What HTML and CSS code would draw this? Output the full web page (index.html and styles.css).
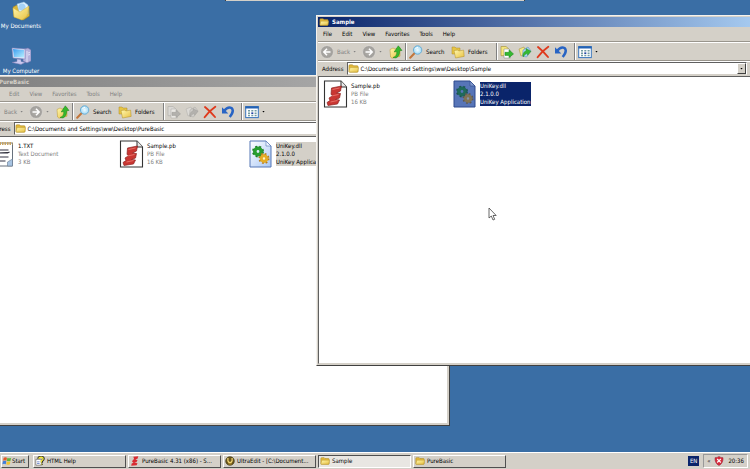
FILE: index.html
```html
<!DOCTYPE html>
<html lang="en">
<head>
<meta charset="utf-8">
<title>Desktop</title>
<link rel="stylesheet" href="styles.css">
</head>
<body>
<svg class="defs" aria-hidden="true">
  <defs>
    <linearGradient id="g-folder" x1="0" y1="0" x2="1" y2="1"><stop offset="0" stop-color="#fff8b0"/><stop offset="1" stop-color="#e8c040"/></linearGradient>
    <linearGradient id="g-screen" x1="0" y1="0" x2="1" y2="1"><stop offset="0" stop-color="#3a9cf0"/><stop offset="1" stop-color="#b8f0ff"/></linearGradient>
    <linearGradient id="g-dll" x1="0" y1="0" x2="1" y2="1"><stop offset="0" stop-color="#ffffff"/><stop offset="1" stop-color="#a9c8f6"/></linearGradient>
    <radialGradient id="g-nav"><stop offset="0" stop-color="#b4b2ae"/><stop offset=".8" stop-color="#a3a19d"/><stop offset="1" stop-color="#8b8985"/></radialGradient>
    <radialGradient id="g-lens"><stop offset="0" stop-color="#f2fcff"/><stop offset="1" stop-color="#9fd8f4"/></radialGradient>
  </defs>
  <symbol id="folder" viewBox="0 0 12 12"><path d="M1 3q0-1 1-1h3l1 1h4q1 0 1 1v5q0 1-1 1H2q-1 0-1-1z" fill="#e2b93a" stroke="#a88420" stroke-width=".6"/><path d="M1 9.8 2.2 5h9.2l-.9 4.8z" fill="url(#g-folder)" stroke="#b8952c" stroke-width=".5"/></symbol>
  <symbol id="back" viewBox="0 0 14 14"><circle cx="7" cy="7" r="6.3" fill="url(#g-nav)" stroke="#dedcd8" stroke-width=".8"/><path d="M10.5 7H4M7 3.8 3.8 7 7 10.2" fill="none" stroke="#fff" stroke-width="1.5"/></symbol>
  <symbol id="forward" viewBox="0 0 14 14"><circle cx="7" cy="7" r="6.3" fill="url(#g-nav)" stroke="#dedcd8" stroke-width=".8"/><path d="M3.5 7H10M7 3.8 10.2 7 7 10.2" fill="none" stroke="#fff" stroke-width="1.5"/></symbol>
  <symbol id="up" viewBox="0 0 14 14"><path d="M1 4.5 4 3l2 1 5-1.5v8.7L3 13.2 1.6 12z" fill="url(#g-folder)" stroke="#b9972f" stroke-width=".5"/><path d="M4 12.5q4-1.2 3.8-6L5.2 7 9.3.8 13 5.4l-2.5.4q.6 5-3.5 7.2z" fill="#35b82e" stroke="#18801a" stroke-width=".5"/></symbol>
  <symbol id="search" viewBox="0 0 14 14"><path d="m5.5 8.3-4.3 4.5" stroke="#c2763c" stroke-width="2" stroke-linecap="round"/><circle cx="8.6" cy="5" r="4.2" fill="url(#g-lens)" stroke="#6caed4" stroke-width="1"/><path d="M6.5 4q.8-1.8 2.5-1.7" stroke="#fff" fill="none"/></symbol>
  <symbol id="folders" viewBox="0 0 14 14"><path d="M1 2h3l1 1h4v6H1z" fill="#e6c546" stroke="#ac8927" stroke-width=".5"/><path d="M3 5.5 7 5l.8 1 4.8-.9.6 6.3L4.5 13z" fill="url(#g-folder)" stroke="#b18e2a" stroke-width=".5"/></symbol>
  <symbol id="moveto" viewBox="0 0 14 14"><path d="M1 1.5h5l2.4 2v7.2H1z" fill="#f5e77d" stroke="#9f8a35" stroke-width=".6"/><path d="M4 4h5l1.5 1.5V13H4z" fill="#fff" stroke="#808080" stroke-width=".5"/><path d="M5 7.3h4V4.8l4.5 4.1L9 12.7v-2.3H5z" fill="#35b931" stroke="#188019" stroke-width=".5"/></symbol>
  <symbol id="copyto" viewBox="0 0 14 14"><path d="m1 4 5-2 2 7-5 2z" fill="#f6e986" stroke="#9f8a35" stroke-width=".5"/><path d="m5 5 5-3 3 4-4.5 6-4-1z" fill="#a8d4f5" stroke="#4f87b8" stroke-width=".5"/><path d="M5 12q-.6-5 3.2-6.3L8 3.5l5 2.8-3.4 4-.4-2Q7 9 5 12z" fill="#35b931" stroke="#188019" stroke-width=".4"/></symbol>
  <symbol id="delete" viewBox="0 0 14 14"><path d="M2 2q5 4 10 10M12.3 1.7Q6 6 1.6 12.3" fill="none" stroke="#df3a1d" stroke-width="1.9" stroke-linecap="round"/></symbol>
  <symbol id="undo" viewBox="0 0 14 14"><path d="M3 6q4-5 7.5-3 3.2 3-1.8 9" fill="none" stroke="#2864c4" stroke-width="2.5"/><path d="M1 2.2v6.4h6.3z" fill="#2864c4"/></symbol>
  <symbol id="views" viewBox="0 0 14 14"><rect x=".7" y="1.6" width="12.6" height="11" fill="#fff" stroke="#3976bd"/><path d="M.3 2.4h13.4" stroke="#2462b4" stroke-width="2.2"/><path d="M3 5.8h2M6.3 5.8h2M9.6 5.8h2M3 8.2h2M9.6 8.2h2M3 10.5h2M6.3 10.5h2M9.6 10.5h2" stroke="#729ca4" stroke-width="1.4"/><path d="M6.3 8.2h2" stroke="#2042a0" stroke-width="1.6"/></symbol>
  <symbol id="pb" viewBox="0 0 24 28"><path d="M1 1h16.5l5.500 6v20H1z" fill="#fff" stroke="#333" stroke-width="1.1"/><path d="M17.500 1v6H23" fill="#e8e8e8" stroke="#333"/><path d="m8 8 10-2-1 5-4 2 4 .5-1 4.500-4 1.500 4 .5-2 4-9.500 1.500-1-3 3-2-1-2.500 4-2.500-2-1z" fill="#c93632" stroke="#8d2423" stroke-width=".7"/><path d="m9 9.500 7-1.500M8 16l7-1.500M7 22l7-1.500" stroke="#ee7f76" stroke-width=".8"/></symbol>
  <symbol id="dll" viewBox="0 0 24 28"><path class="page" d="M1.500 1h16l5 5v21h-21z" fill="url(#g-dll)" stroke="#5577b5"/><path d="M17.500 1v5h5z" fill="#eef5ff" stroke="#5577b5" stroke-width=".6"/><circle cx="9.500" cy="11.500" r="3.200" fill="none" stroke="#279e2f" stroke-width="3.600"/><circle cx="9.500" cy="11.500" r="5.200" fill="none" stroke="#1d8026" stroke-width="1.500" stroke-dasharray="2 2.200"/><circle cx="15.500" cy="18.500" r="2.800" fill="#fff6c8" stroke="#e5ad25" stroke-width="3.200"/><circle cx="15.500" cy="18.500" r="4.800" fill="none" stroke="#b97e18" stroke-width="1.500" stroke-dasharray="1.800 2"/></symbol>
  <symbol id="dll-selected" viewBox="0 0 24 28"><path d="M1.500 1h16l5 5v21h-21z" fill="#5775b8" stroke="#2f4a8c"/><path d="M17.500 1v5h5z" fill="#7f97cc" stroke="#2f4a8c" stroke-width=".6"/><circle cx="9.500" cy="11.500" r="3.200" fill="none" stroke="#1f6a5a" stroke-width="3.600"/><circle cx="9.500" cy="11.500" r="5.200" fill="none" stroke="#1b5550" stroke-width="1.500" stroke-dasharray="2 2.200"/><circle cx="15.500" cy="18.500" r="2.800" fill="#8893a8" stroke="#7f7355" stroke-width="3.200"/><circle cx="15.500" cy="18.500" r="4.800" fill="none" stroke="#5f5a50" stroke-width="1.500" stroke-dasharray="1.800 2"/></symbol>
  <symbol id="txt" viewBox="0 0 24 28"><path d="M2 3h20v23H2z" fill="#fff" stroke="#68717c"/><path d="M4 3.500h18" stroke="#c8a562" stroke-width="3" stroke-dasharray="1.500 1"/><path d="M5 10h13M5 13h12l2-1M5 17h13M5 21h10" stroke="#334" stroke-width="1.200"/><path d="m17 22 5-3v7h-5z" fill="#a8c4e2" stroke="#66788f" stroke-width=".6"/></symbol>
  <symbol id="documents" viewBox="0 0 20 20"><path d="m2 6 4-2 12 2 .5 9-6 4L3 16z" fill="#dbb638" stroke="#957a28" stroke-width=".5"/><path d="M6 3 13 1l4 3v9l-8 1z" fill="#dff2ff" stroke="#88b8dd" stroke-width=".5"/><circle cx="11" cy="6" r="3.500" fill="#a5d2f6"/><path d="m2 7 7 4 9-6-2 10-5 4-8-3z" fill="url(#g-folder)" stroke="#d5b742" stroke-width=".5"/></symbol>
  <symbol id="computer" viewBox="0 0 20 20"><path d="m13 3 4-1 3 2v11l-4 2-4-2z" fill="#b3b1dc" stroke="#7775ad" stroke-width=".5"/><path d="M16 5v11M17 7l2-.5M17 9l2-.5" stroke="#eeeeff" stroke-width=".8"/><path d="m1 2 13 1v10L2 12z" fill="#e2e5fa" stroke="#8586bd" stroke-width=".6"/><path d="m2 3 11 1v7.500L3 11z" fill="url(#g-screen)"/><path d="m6 13 4 .4v2l4 1-4 2-9-2 5-1z" fill="#cbcaf0" stroke="#7f7db3" stroke-width=".5"/></symbol>
  <symbol id="flag" viewBox="0 0 12 12"><path d="M2 2q2-1.300 4 0L5.300 5.700q-2-1.200-4 0z" fill="#e35b2b"/><path d="M6.500 2q2 1.200 4.500 0l-.8 3.700q-2.300 1.200-4.400 0z" fill="#62b43b"/><path d="M1.200 6.400q2-1.300 4 0L4.500 10q-2-1.200-4 0z" fill="#3f7edb"/><path d="M5.700 6.400q2 1.300 4.400 0L9.400 10q-2.300 1.200-4.300 0z" fill="#f0c330"/></symbol>
  <symbol id="help" viewBox="0 0 12 12"><path d="M1 4h7v7H1z" fill="#fff" stroke="#555" stroke-width=".7"/><path d="M2.500 7h3M2.500 9h3" stroke="#3657b5" stroke-width=".8"/><path d="M4 3.500q.2-2.700 3.300-2.500 3.500.2 3 2.700-.3 1.500-2 2.300v2M8.200 9.200v1.300" fill="none" stroke="#333" stroke-width="2.700"/><path d="M4.500 3.500q.2-2 2.800-2 2.700.2 2.300 2.200-.3 1.300-2 2v2M7.800 9.200v1" fill="none" stroke="#f4e936" stroke-width="1.600"/></symbol>
  <symbol id="pbmark" viewBox="0 0 12 12"><path d="m4 1 6-.6-1 3-2.600.6L9 5 7.700 7.500 5 8.200l4 .6-1 2.300-6.500.6L2 9l2.300-1L2.500 7 3.500 4.500 5 4z" fill="#d92b32"/></symbol>
  <symbol id="ultra" viewBox="0 0 12 12"><circle cx="6" cy="6" r="5.200" fill="#6c561b" stroke="#36300f" stroke-width=".7"/><path d="M3.500 2.500v3.200Q4 8 6 8t2.500-2.300V2.500" fill="none" stroke="#f1d675" stroke-width="1.500"/><path d="M4 9.500h4" stroke="#d0a83c"/></symbol>
  <symbol id="shield" viewBox="0 0 12 12"><path d="M6 .5q2 1.500 4.800 1.500.6 6.500-4.800 9.500Q.6 8.500 1.200 2 4 2 6 .5z" fill="#d82b3c" stroke="#8f2035" stroke-width=".6"/><path d="m3.800 3.600 4.400 4.200m0-4.200L3.800 7.800" stroke="#fff" stroke-width="1.300"/></symbol>
</svg>

<main class="desktop">
  <div class="offscreen-edge"></div>

  <div class="shortcuts">
    <a class="shortcut" href="#"><svg><use href="#documents"/></svg><span>My Documents</span></a>
    <a class="shortcut" href="#"><svg><use href="#computer"/></svg><span>My Computer</span></a>
  </div>

  <section class="window window-back" aria-label="PureBasic">
    <header class="titlebar"><svg><use href="#folder"/></svg><h2>PureBasic</h2></header>
    <nav class="menubar"><button>File</button><button>Edit</button><button>View</button><button>Favorites</button><button>Tools</button><button>Help</button></nav>
    <div class="toolbar">
      <button class="tool tool-back" disabled><svg><use href="#back"/></svg><span>Back</span><i class="caret"></i></button>
      <button class="tool tool-forward" disabled aria-label="Forward"><svg><use href="#forward"/></svg><i class="caret"></i></button>
      <button class="tool tool-up" aria-label="Up"><svg><use href="#up"/></svg></button>
      <i class="separator"></i>
      <button class="tool tool-text"><svg><use href="#search"/></svg><span>Search</span></button>
      <button class="tool tool-text"><svg><use href="#folders"/></svg><span>Folders</span></button>
      <i class="separator"></i>
      <button class="tool tool-icon" disabled aria-label="Move to"><svg><use href="#moveto"/></svg></button>
      <button class="tool tool-icon" disabled aria-label="Copy to"><svg><use href="#copyto"/></svg></button>
      <button class="tool tool-icon" aria-label="Delete"><svg><use href="#delete"/></svg></button>
      <button class="tool tool-icon" aria-label="Undo"><svg><use href="#undo"/></svg></button>
      <i class="separator"></i>
      <button class="tool" aria-label="Views"><svg><use href="#views"/></svg><i class="caret"></i></button>
    </div>
    <div class="addressbar">
      <label for="address-back">Address</label>
      <div class="combo"><svg><use href="#folder"/></svg><input id="address-back" type="text" value="C:\Documents and Settings\ww\Desktop\PureBasic"><button aria-label="Show addresses"><i class="caret"></i></button></div>
    </div>
    <div class="files">
      <div class="file"><svg><use href="#txt"/></svg><p><b>1.TXT</b><span>Text Document</span><span>3 KB</span></p></div>
      <div class="file"><svg><use href="#pb"/></svg><p><b>Sample.pb</b><span>PB File</span><span>16 KB</span></p></div>
      <div class="file file-marked"><svg><use href="#dll"/></svg><p><b>UniKey.dll</b><span>2.1.0.0</span><span>UniKey Application</span></p></div>
    </div>
  </section>

  <section class="window window-front" aria-label="Sample">
    <header class="titlebar"><svg><use href="#folder"/></svg><h2>Sample</h2></header>
    <nav class="menubar"><button>File</button><button>Edit</button><button>View</button><button>Favorites</button><button>Tools</button><button>Help</button></nav>
    <div class="toolbar">
      <button class="tool tool-back" disabled><svg><use href="#back"/></svg><span>Back</span><i class="caret"></i></button>
      <button class="tool tool-forward" disabled aria-label="Forward"><svg><use href="#forward"/></svg><i class="caret"></i></button>
      <button class="tool tool-up" aria-label="Up"><svg><use href="#up"/></svg></button>
      <i class="separator"></i>
      <button class="tool tool-text"><svg><use href="#search"/></svg><span>Search</span></button>
      <button class="tool tool-text"><svg><use href="#folders"/></svg><span>Folders</span></button>
      <i class="separator"></i>
      <button class="tool tool-icon" aria-label="Move to"><svg><use href="#moveto"/></svg></button>
      <button class="tool tool-icon" aria-label="Copy to"><svg><use href="#copyto"/></svg></button>
      <button class="tool tool-icon" aria-label="Delete"><svg><use href="#delete"/></svg></button>
      <button class="tool tool-icon" aria-label="Undo"><svg><use href="#undo"/></svg></button>
      <i class="separator"></i>
      <button class="tool" aria-label="Views"><svg><use href="#views"/></svg><i class="caret"></i></button>
    </div>
    <div class="addressbar">
      <label for="address-front">Address</label>
      <div class="combo"><svg><use href="#folder"/></svg><input id="address-front" type="text" value="C:\Documents and Settings\ww\Desktop\Sample"><button aria-label="Show addresses"><i class="caret"></i></button></div>
    </div>
    <div class="files">
      <div class="file"><svg><use href="#pb"/></svg><p><b>Sample.pb</b><span>PB File</span><span>16 KB</span></p></div>
      <div class="file file-selected"><svg><use href="#dll-selected"/></svg><p><b>UniKey.dll</b><span>2.1.0.0</span><span>UniKey Application</span></p></div>
    </div>
  </section>

  <svg class="cursor" viewBox="0 0 9 14"><path d="M1 1v10l2.300-2 1.700 4 1.700-.7L5 8.500h3.200z" fill="#fff" stroke="#444" stroke-width=".8"/></svg>
</main>

<footer class="taskbar">
  <button class="start"><svg><use href="#flag"/></svg>Start</button>
  <div class="tasks">
    <button class="task"><svg><use href="#help"/></svg><span>HTML Help</span></button>
    <button class="task"><svg><use href="#pbmark"/></svg><span>PureBasic 4.31 (x86) - S...</span></button>
    <button class="task"><svg><use href="#ultra"/></svg><span>UltraEdit - [C:\Document...</span></button>
    <button class="task task-active"><svg><use href="#folder"/></svg><span>Sample</span></button>
    <button class="task"><svg><use href="#folder"/></svg><span>PureBasic</span></button>
  </div>
  <button class="language">EN</button>
  <div class="tray"><span>«</span><svg><use href="#shield"/></svg><time>20:36</time></div>
</footer>
</body>
</html>
```

FILE: styles.css
```css
* { box-sizing: border-box; }

body {
  display: flex;
  flex-direction: column;
  height: 100vh;
  margin: 0;
  overflow: hidden;
  background: #3a6ea5;
  color: #000;
  font: 6px/8px "DejaVu Sans Condensed", "DejaVu Sans", sans-serif;
}

button, input {
  margin: 0;
  padding: 0;
  border: 0;
  background: none;
  color: inherit;
  font: inherit;
}

svg { flex: none; display: block; }
h2, p { margin: 0; }
.defs { position: absolute; width: 0; height: 0; }

.desktop {
  position: relative;
  flex: 1;
  min-height: 0;
  overflow: hidden;
}

.offscreen-edge {
  position: absolute;
  top: 0;
  left: 225px;
  width: 300px;
  height: 1px;
  background: #d4d0c8;
  border-right: 1px solid #404040;
  border-left: 1px solid #404040;
}

.shortcuts {
  display: flex;
  flex-direction: column;
  gap: 16px;
  width: 42px;
  padding-top: 1px;
}
.shortcut {
  display: flex;
  flex-direction: column;
  align-items: center;
  gap: 1px;
  color: #fff;
  text-decoration: none;
  white-space: nowrap;
}
.shortcut svg { width: 20px; height: 20px; }

/* Explorer windows */
.window {
  position: absolute;
  display: flex;
  flex-direction: column;
  width: 467px;
  height: 351px;
  padding: 1px;
  border: 1px solid;
  border-color: #f4f2ee #404040 #404040 #f4f2ee;
  background: #d4d0c8;
}
.window-back { top: 75px; left: -17px; }
.window-front { top: 15px; left: 316px; }

.titlebar {
  display: flex;
  align-items: center;
  gap: 3px;
  height: 10px;
  padding-left: 1px;
  background: linear-gradient(90deg, #0a246a, #a6caf0 94%);
  color: #fff;
}
.window-back .titlebar {
  background: linear-gradient(90deg, #808080, #b4b4b4);
  color: #d4d0c8;
}
.titlebar svg { width: 10px; height: 10px; }
.titlebar h2 { font: inherit; font-weight: bold; }

.menubar {
  display: flex;
  gap: 10px;
  height: 15px;
  padding-left: 5px;
  border-bottom: 1px solid #99958d;
}
.window-back .menubar { color: #808080; }

.toolbar {
  display: flex;
  align-items: center;
  height: 19px;
  padding-left: 2px;
  border-top: 1px solid #fff;
  border-bottom: 1px solid #99958d;
}
.tool { display: flex; align-items: center; gap: 3px; height: 17px; }
.tool svg { width: 14px; height: 14px; }
.tool:disabled { color: #808080; }
.tool-back { width: 42px; }
.tool-forward { width: 27px; }
.tool-up { width: 14px; }
.tool-text { width: 42px; }
.tool-text + .tool-text { width: 43px; }
.tool-icon { width: 18px; }
.tool-icon:disabled { filter: grayscale(1); opacity: .5; }
.separator {
  width: 2px;
  height: 17px;
  margin: 0 2px;
  border-left: 1px solid #808080;
  border-right: 1px solid #fff;
}
.caret {
  width: 3px;
  height: 2px;
  background: currentColor;
  clip-path: polygon(0 0, 100% 0, 50% 100%);
}

.addressbar {
  display: flex;
  align-items: center;
  gap: 4px;
  height: 15px;
  padding: 0 34px 1px 4px;
  border-top: 1px solid #fff;
}
.combo {
  display: flex;
  flex: 1;
  align-items: center;
  gap: 1px;
  height: 13px;
  border: 1px solid;
  border-color: #606060 #fff #d4d0c8 #606060;
  background: #fff;
}
.combo svg { width: 11px; height: 11px; }
.combo input { flex: 1; min-width: 0; outline: 0; }
.combo button {
  display: grid;
  place-items: center;
  width: 9px;
  height: 11px;
  border: 1px solid;
  border-color: #fff #404040 #404040 #fff;
  background: #d4d0c8;
}

.files {
  display: flex;
  flex: 1;
  align-items: flex-start;
  padding: 3px 0 0 4px;
  border: 1px solid;
  border-color: #606060 #d4d0c8 #d4d0c8 #606060;
  background: #fff;
}
.file { display: flex; flex: none; align-items: center; gap: 3px; width: 129px; }
.file svg { width: 25px; height: 28px; }
.file p { display: flex; flex-direction: column; white-space: nowrap; }
.file b { font-weight: normal; }
.file span { color: #808080; }
.file-marked p { background: #d4d0c8; }
.file-marked span { color: #000; }
.file-selected p { background: #0a246a; color: #fff; }
.file-selected span { color: #fff; }

.cursor {
  position: absolute;
  top: 207px;
  left: 488px;
  width: 9px;
  height: 14px;
}

/* Taskbar */
.taskbar {
  display: flex;
  align-items: center;
  gap: 4px;
  height: 17px;
  padding: 0 2px 0 1px;
  border-top: 1px solid #fff;
  background: #d4d0c8;
}
.start, .task {
  display: flex;
  align-items: center;
  height: 13px;
  border: 1px solid;
  border-color: #fff #505050 #505050 #fff;
  white-space: nowrap;
}
.start { width: 28px; }
.start svg, .task svg { width: 10px; height: 10px; }
.tasks { display: flex; flex: 1; gap: 2px; }
.task { width: 93px; gap: 2px; padding-left: 1px; }
.task-active { border-color: #505050 #fff #fff #505050; background: #e9e7e3; }
.language {
  width: 11px;
  height: 10px;
  background: #0a246a;
  color: #fff;
  text-align: center;
}
.tray {
  display: flex;
  align-items: center;
  gap: 4px;
  height: 14px;
  padding: 0 3px;
  border: 1px solid;
  border-color: #999 #fff #fff #999;
}
.tray svg { width: 10px; height: 10px; }
```
